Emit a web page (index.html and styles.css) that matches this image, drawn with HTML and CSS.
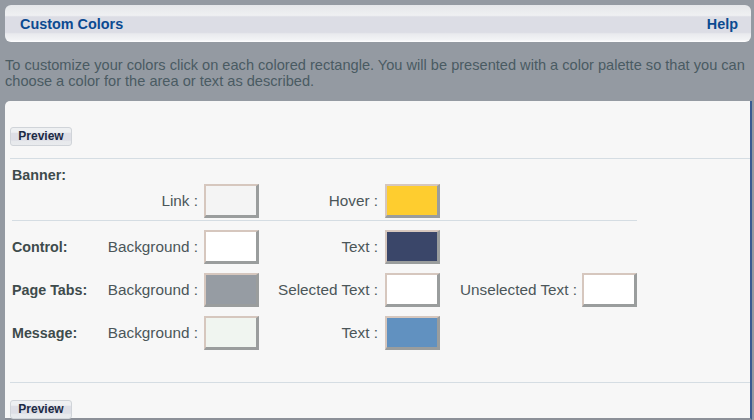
FILE: index.html
```html
<!DOCTYPE html>
<html>
<head>
<meta charset="utf-8">
<title>Custom Colors</title>
<link rel="stylesheet" href="styles.css">
</head>
<body>
<div class="page">
  <div class="header">
    <span class="title">Custom Colors</span>
    <a class="help">Help</a>
  </div>
  <p class="intro">To customize your colors click on each colored rectangle. You will be presented with a color palette so that you can<br>choose a color for the area or text as described.</p>
  <div class="panel">
    <div class="btn-row"><button class="btn">Preview</button></div>
    <div class="sep"></div>
    <div class="colors">
      <div class="group-title">Banner:</div>
      <div class="row">
        <span></span>
        <span class="lbl">Link :</span>
        <span class="sw sw-link"></span>
        <span class="lbl">Hover :</span>
        <span class="sw sw-hover"></span>
      </div>
      <div class="sep sep-short"></div>
      <div class="row">
        <span class="name">Control:</span>
        <span class="lbl">Background :</span>
        <span class="sw sw-white"></span>
        <span class="lbl">Text :</span>
        <span class="sw sw-navy"></span>
      </div>
      <div class="row">
        <span class="name">Page Tabs:</span>
        <span class="lbl">Background :</span>
        <span class="sw sw-gray"></span>
        <span class="lbl">Selected Text :</span>
        <span class="sw sw-white"></span>
        <span class="lbl lbl-last">Unselected Text :</span>
        <span class="sw sw-white"></span>
      </div>
      <div class="row">
        <span class="name">Message:</span>
        <span class="lbl">Background :</span>
        <span class="sw sw-mint"></span>
        <span class="lbl">Text :</span>
        <span class="sw sw-blue"></span>
      </div>
    </div>
    <div class="sep sep-bottom"></div>
    <div class="btn-row btn-row-bottom"><button class="btn">Preview</button></div>
  </div>
</div>
</body>
</html>
```

FILE: styles.css
```css
html, body {
  margin: 0;
  padding: 0;
}
body {
  background: #949aa2;
  font-family: "Liberation Sans", Arial, sans-serif;
  width: 754px;
  height: 420px;
  overflow: hidden;
}
.page {
  padding: 5px 2px 0 5px;
}
.header {
  height: 37px;
  margin-right: 1px;
  border-radius: 6px;
  background: linear-gradient(to bottom, #e5e7ea 0, #eff0f2 28%, #dcdde5 32%, #dcdde5 74%, #e9eaee 78%, #f2f3f5 94%, #ffffff 100%);
  display: flex;
  align-items: center;
  justify-content: space-between;
  padding: 0 13px 0 15px;
  box-sizing: border-box;
}
.title, .help {
  font-weight: bold;
  font-size: 14.4px;
  color: #0b4a91;
}
.intro {
  margin: 0;
  padding: 15px 0 12px 0;
  font-size: 14.6px;
  line-height: 16px;
  color: #4a5b62;
  white-space: nowrap;
}
.panel {
  background: #f7f7f7;
  border-right: 2px solid #3a5b92;
  border-bottom: 2px solid #8c9098;
  border-top-left-radius: 5px;
  height: 319px;
  box-sizing: border-box;
  padding-top: 25px;
}
.btn-row {
  padding-left: 5px;
  height: 19px;
}
.btn {
  width: 62px;
  height: 19px;
  padding: 0;
  border: 1px solid #d0d4d9;
  border-radius: 3px;
  background: linear-gradient(to bottom, #eef0f2 0, #eef0f2 25%, #dedfe6 30%, #dedfe6 72%, #e7e9ec 78%, #e9ebee 100%);
  font-family: "Liberation Sans", Arial, sans-serif;
  font-weight: bold;
  font-size: 12px;
  color: #1c2a44;
  box-sizing: border-box;
}
.sep {
  height: 1px;
  background: #d5dde3;
  margin: 13px 0 0 5px;
}
.colors {
  margin-left: 7px;
  width: 625px;
}
.group-title {
  padding-top: 8px;
  height: 16px;
  line-height: 16px;
  margin-bottom: 1px;
  font-weight: bold;
  font-size: 14.3px;
  color: #3e4b4c;
}
.row {
  display: grid;
  grid-template-columns: 92px 100px 55px 126px 55px 142px 55px;
  align-items: center;
  height: 34px;
  margin-bottom: 9px;
}
.name {
  font-weight: bold;
  font-size: 14.3px;
  color: #3e4b4c;
}
.lbl {
  text-align: right;
  padding-right: 6px;
  font-size: 15.3px;
  color: #4b5659;
  white-space: nowrap;
}
.row .lbl:nth-child(4) {
  padding-right: 7px;
}
.lbl-last {
  padding-right: 5px;
}
.sw {
  display: block;
  box-sizing: border-box;
  width: 55px;
  height: 34px;
  border-style: solid;
  border-width: 2px 3px 3px 2px;
  border-color: #d6c7be #9a9d9d #9a9d9d #d6c7be;
}
.sw-link { background: #f4f4f4; }
.sw-hover { background: #fecd2f; }
.sw-white { background: #ffffff; }
.sw-navy { background: #3a4669; }
.sw-gray { background: #969ca3; }
.sw-mint { background: #f0f5f0; }
.sw-blue { background: #6191c0; }
.sep-short {
  margin: -7px 0 9px 0;
}
.sep-bottom {
  margin: 32px 0 0 5px;
}
.btn-row-bottom {
  margin-top: 16px;
}
```
